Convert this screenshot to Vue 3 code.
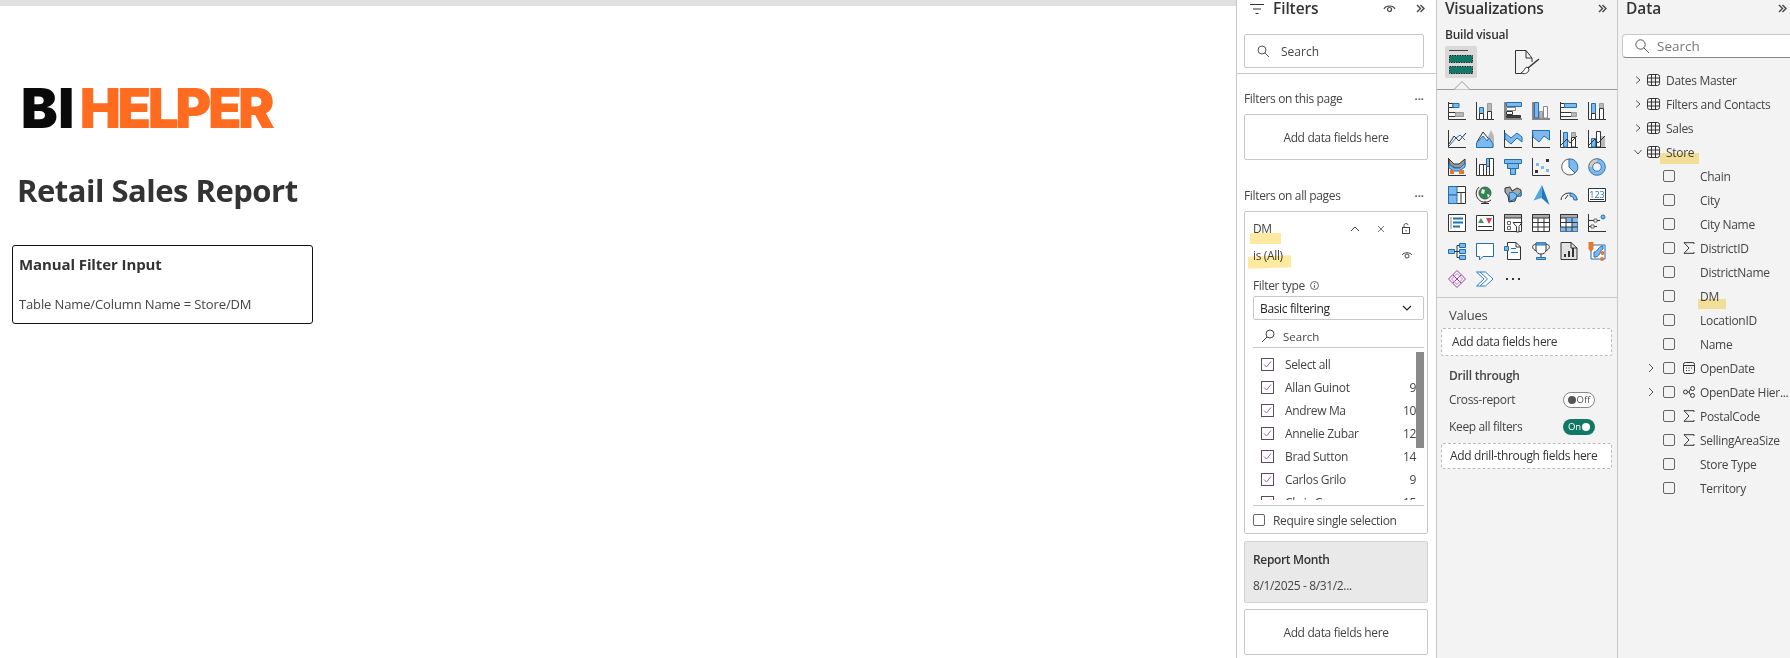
<script setup>
const K = '#333'
const B = '#1f6fb5'
const L = '#7fb8ec'
const G = '#b8b8b8'
const W = '#fff'
const O = '#e8772e'
const R = (x, y, w, h, f, s) => [`M${x} ${y}h${w}v${h}h${-w}z`, s || 'none', f]
const P = (d, s, f, w) => [d, s || 'none', f || 'none', w]
const ax = P('M.5 0V17.5H18', K)
const icons = [
  [ax, R(.5,1.5,4.5,4,W,K), R(5,1.5,6,4,L,B), R(.5,10.5,7,4,W,K), R(7.5,10.5,8,4,G,'#999')],
  [ax, R(3.5,5.5,4,6,L,B), R(3.5,11.5,4,6,W,K), R(11.5,1.5,4,8,G,'#999'), R(11.5,9.5,4,8,W,K)],
  [P('M1 0V17H18','#888',null,2), R(2.5,.5,15,4,L,B), R(2.5,5.5,9,3,W,'#888'), R(2.5,9.5,6,3,W,K), R(2.5,13.5,14,2,'#444',K)],
  [P('M1 0V17H18','#888',null,2), R(2.5,.5,4,15.5,L,B), R(7.5,9.5,3,6.5,G,'#999'), R(11.5,4.5,4,11.5,W,'#888')],
  [ax, R(.5,1.5,4,4,W,K), R(4.5,1.5,12,4,L,B), R(.5,10.5,11,4,W,K), R(11.5,10.5,5,4,G,'#999')],
  [ax, R(3.5,1.5,4,10,L,B), R(3.5,11.5,4,6,W,K), R(11.5,1.5,4,5,G,'#999'), R(11.5,6.5,4,11,W,K)],

  [ax, P('M1 14L6 6L11 11L18 3',K), P('M1 16L8 8L12 5L17 10',B)],
  [P('M11 9L15 0L18 6V17H11z','none',G), P('M1 12L7 2L12 8',K), P('M.5 17.5V13L7 6L11 11L13 8L17 14V17.5z',B,L)],
  [ax, P('M1 3L7 8L13 3L18 7V12L13 8L7 14L1 9z',B,L)],
  [ax, P('M.5 .5H17.5V10L12 6L7 12L1 7z',B,L)],
  [ax, R(3.5,2.5,4,14.5,L,B), R(11.5,2.5,4,5,G,'#999'), R(11.5,7.5,4,9.5,W,K), P('M0 16L7 9L10 13L17 6',K)],
  [ax, R(3.5,8.5,4,8.5,L,B), R(8.5,1.5,4,15.5,W,K), R(13,6,4,11,G), P('M0 16L7 9L10 13L17 6',K)],

  [ax, P('M1 1L6 6H11L17 1V7L12 10H7L1 6z',K,'#999'), P('M1 6L6 10L12 10L17 5V9L11 13H6L1 10z',B,L), R(2,12,4,4,O), R(11,12,5,4,O)],
  [ax, R(3.5,6.5,4,11,W,K), R(7.5,6.5,3,11,W,K), R(10.5,.5,3,8,L,B), R(13.5,.5,4,17,W,K)],
  [R(.5,1.5,17,4,L,B), R(3.5,5.5,11,5,L,B), R(6.5,10.5,5,6,L,B)],
  [ax, R(4,5,3,3,L), R(9,8,3,3,L), R(14,11,3,3,L), R(14,1,3,3,K), R(3,12,3,3,K)],
  [P('M9 1A8 8 0 1 0 15 15','#555',W), P('M9 1A8 8 0 0 1 15 15L9 9z',B,L)],
  [P('M9 2.7A6.3 6.3 0 1 1 2.7 9',L,'none',3.4), P('M2.7 9A6.3 6.3 0 0 1 9 2.7','#ccc','none',3.4), P('M9 .7A8.3 8.3 0 1 1 .7 9',B), P('M.7 9A8.3 8.3 0 0 1 9 .7','#666'), P('M9 4.7A4.3 4.3 0 1 1 4.7 9',B), P('M4.7 9A4.3 4.3 0 0 1 9 4.7','#666')],

  [R(.5,.5,17,17,W,K), R(.5,.5,8.5,8.5,L,B), R(.5,9,8.5,8.5,L,B), P('M9 6.5H17M13 6.5V17',K)],
  [P('M9 1A6 6 0 1 1 9 13A6 6 0 1 1 9 1','#555','#2b8a4f'), P('M6 3L9 4L8 8L5 7zM11 8L14 9L12 12z','none','#eee'), P('M3 1A8.5 8.5 0 0 0 15 14',K), P('M9 15V17M5 17.5H13',K)],
  [P('M1 2L6 1L8 5L13 2L17 4V10L13 10L11 15L5 16L4 10L1 6z',K,'#a8a8a8'), P('M5 7L9 6L13 9L12 12L9 14L6 15z',B,L), P('M13 10L17 6V10z',B,L)],
  [P('M10 -1L1.5 14.5L9.5 12z','none','#4fa9de'), P('M10 -1L17.5 19L9.5 12z','none','#1f78c4')],
  [P('M1 14A8 7 0 0 1 17 14',K), P('M5 13L8 9',K), P('M10 7A7 7 0 0 1 17 14H14A4 4 0 0 0 10 10z',B,L)],
  [R(.5,2.5,17,13,W,K), P('M2 13.5H16',K)],

  [R(.5,.5,17,17,W,K), P('M3 3V15','#888'), P('M5 4.5H15M5 8.5H15M5 12.5H12',B,'none',2)],
  [R(.5,1.5,17,15,W,K), P('M5 4L8 9H2z','none','#3f9a5f'), P('M10 4H16L13 10z','none','#d9434e'), P('M2 12.5H16',K)],
  [R(.5,.5,17,17,W,K), R(.5,.5,17,3.5,'#aaa',K), R(3.5,7.5,3,3,W,'#666'), R(3.5,12.5,3,3,W,'#666'), P('M9 8.5H18L15 12.5V18H12.5V12.5z',K,W)],
  [R(.5,.5,17,17,W,K), R(.5,.5,17,3.5,'#aaa',K), P('M.5 8.5H17.5M.5 13H17.5M6 4V17.5M12 4V17.5',K)],
  [R(.5,.5,17,17,W,K), R(.5,.5,17,3.5,'#aaa',K), R(6,4,12,4.5,L), R(12,8.5,5.5,4.5,L), R(.5,13,17,4.5,L), P('M.5 8.5H17.5M.5 13H17.5M6 4V17.5M12 4V17.5',K)],
  [P('M.5 0V18M.5 17.5H18',K), P('M.5 6.5H12M.5 12.5H9',K), R(6,5,3,3,W,'#666'), R(3,11,3,3,W,'#666'), P('M15 1A2 2 0 1 1 15 5A2 2 0 1 1 15 1',B,L)],

  [R(.5,7.5,6,4,L,B), R(11.5,1.5,6,4,L,B), R(11.5,7.5,6,4,L,B), R(11.5,13.5,6,4,L,B), P('M6.5 9.5H11.5M9 3.5V15.5M9 3.5H11.5M9 15.5H11.5',K)],
  [P('M.5 1.5H17.5V14.5H7L3.5 18V14.5H.5z',B,W)],
  [P('M3.5 .5H12L16.5 5V17.5H3.5z',K,W), P('M12 .5V5H16.5',K), R(.5,4.5,4,4,L,B), P('M7 6.5H12M7 10.5H14',B)],
  [P('M3.5 2.5C-1 2.5 0 8 5 9M14.5 2.5C19 2.5 18 8 13 9',K), P('M4 1H14V8C14 11 11 12 9 12C7 12 4 11 4 8z',K,W), R(4,1,10,2,L,B), P('M9 12V15',K), R(4.5,15.5,9,2,L,B)],
  [P('M1 .5H11L17 6V17.5H1z',K,'#e2e2e2'), P('M11 .5V6H17',K), R(4,12,2,3,K), R(8,9,2,6,K), R(12,6,2,9,K)],
  [R(3,3,14,14,W,B), P('M6 10C10 10 9 5 15 4V7C12 8 13 13 8 15H6z',B,L), P('M.5 0H5.5V7L3 10L.5 7z','none',O), P('M14.5 9A2 2 0 1 1 14.5 13A2 2 0 1 1 14.5 9M14 15A2 2 0 1 1 14 19A2 2 0 1 1 14 15','none',O)],

  [P('M9 .5L17.5 9L9 17.5L.5 9z','#a33ea1'), P('M5 5L13 13M13 5L5 13','#a33ea1'), P('M9 3.5L14.5 9L9 14.5L3.5 9z','#c98cc8')],
  [P('M.5 2H9.5L17 9L9.5 16H.5L8 9z','#2a7bd3',W), P('M4 2L11.5 9L4 16','#2a7bd3')],
  [R(2,8,2,2,K), R(8,8,2,2,K), R(14,8,2,2,K)]
]
const people = [
  ['Select all', ''], ['Allan Guinot', '9'], ['Andrew Ma', '10'], ['Annelie Zubar', '12'],
  ['Brad Sutton', '14'], ['Carlos Grilo', '9'], ['Chris Gray', '15']
]
const tables = ['Dates Master', 'Filters and Contacts', 'Sales', 'Store']
const fields = [
  { n: 'Chain' }, { n: 'City' }, { n: 'City Name' }, { n: 'DistrictID', i: 's' }, { n: 'DistrictName' },
  { n: 'DM' }, { n: 'LocationID' }, { n: 'Name' }, { n: 'OpenDate', i: 'c', e: 1 },
  { n: 'OpenDate Hier...', i: 'h', e: 1 }, { n: 'PostalCode', i: 's' }, { n: 'SellingAreaSize', i: 's' },
  { n: 'Store Type' }, { n: 'Territory' }
]
</script>

<template>
  <div class="app">
    <main class="canvas">
      <div class="topbar"></div>
      <div class="logo"><span class="bi">BI</span><span class="helper">HELPER</span></div>
      <h1 class="title">Retail Sales Report</h1>
      <section class="note">
        <h2>Manual Filter Input</h2>
        <p>Table Name/Column Name = Store/DM</p>
      </section>
    </main>

    <aside class="filters">
      <header class="fhead">
        <svg class="ic" width="14" height="12" viewBox="0 0 14 12"><path d="M0 1.5H14M3 6H11M5.5 10.5H8.5" stroke="#333" stroke-width="1.2" fill="none"/></svg>
        <span class="ptitle">Filters</span>
        <svg class="eye" width="13" height="10" viewBox="0 0 13 10"><path d="M1 5C3 1 10 1 12 5" stroke="#444" stroke-width="1.2" fill="none"/><circle cx="6.5" cy="5.5" r="2" stroke="#444" stroke-width="1.2" fill="none"/></svg>
        <svg class="chev" width="9" height="9" viewBox="0 0 9 9"><path d="M1 1L4.5 4.5L1 8M4.5 1L8 4.5L4.5 8" stroke="#444" stroke-width="1.4" fill="none"/></svg>
      </header>
      <div class="fsearch">
        <svg width="13" height="13" viewBox="0 0 13 13"><circle cx="5" cy="5" r="4" stroke="#555" fill="none"/><path d="M8 8L12 12" stroke="#555"/></svg>
        <span>Search</span>
      </div>
      <div class="fsep"></div>
      <div class="fsec first"><span>Filters on this page</span><i class="dots">···</i></div>
      <div class="dropbox">Add data fields here</div>
      <div class="fsec second"><span>Filters on all pages</span><i class="dots">···</i></div>
      <section class="fcard">
        <div class="frow dm">
          <span>DM</span>
          <svg class="a1" width="10" height="6" viewBox="0 0 10 6"><path d="M1 5L5 1L9 5" stroke="#444" fill="none"/></svg>
          <svg class="a2" width="8" height="8" viewBox="0 0 8 8"><path d="M1 1L7 7M7 1L1 7" stroke="#777" fill="none"/></svg>
          <svg class="a3" width="10" height="11" viewBox="0 0 10 11"><rect x="1.5" y="4.5" width="7" height="6" stroke="#444" fill="none"/><path d="M3 4.5V2.5C3 0 7 0 7 2" stroke="#444" fill="none"/><path d="M5 7V8.5" stroke="#444"/></svg>
        </div>
        <div class="frow isall">
          <span>is (All)</span>
          <svg class="a3" width="12" height="9" viewBox="0 0 12 9"><path d="M1 4C3 1 9 1 11 4" stroke="#444" fill="none"/><circle cx="6" cy="5" r="2" stroke="#444" fill="none"/></svg>
        </div>
        <div class="ftype">Filter type
          <svg width="9" height="9" viewBox="0 0 9 9"><circle cx="4.5" cy="4.5" r="4" stroke="#666" fill="none"/><path d="M4.5 4V7M4.5 2V3" stroke="#666"/></svg>
        </div>
        <div class="fselect">
          <span>Basic filtering</span>
          <svg width="10" height="6" viewBox="0 0 10 6"><path d="M1 1L5 5L9 1" stroke="#222" fill="none" stroke-width="1.2"/></svg>
        </div>
        <div class="lsearch">
          <svg width="14" height="14" viewBox="0 0 14 14"><circle cx="9" cy="5" r="4" stroke="#444" fill="none"/><path d="M6 8L1 13" stroke="#444"/></svg>
          <span>Search</span>
        </div>
        <div class="plist">
          <div class="pinner">
            <div v-for="p in people" :key="p[0]" class="pitem">
              <svg width="13" height="13" viewBox="0 0 13 13"><rect x=".5" y=".5" width="12" height="12" stroke="#5a4a5a" fill="#fff"/><path d="M3 6.5L5.5 9L10 3.5" stroke="#9a6a9a" fill="none"/></svg>
              <span class="pname">{{ p[0] }}</span>
              <span class="pcount">{{ p[1] }}</span>
            </div>
            <div class="pscroll"></div>
          </div>
        </div>
        <div class="req">
          <span class="box"></span>
          <span>Require single selection</span>
        </div>
      </section>
      <section class="rcard">
        <strong>Report Month</strong>
        <span>8/1/2025 - 8/31/2...</span>
      </section>
      <div class="dropbox last">Add data fields here</div>
    </aside>

    <aside class="viz">
      <header class="phead">
        <span class="ptitle vt">Visualizations</span>
        <svg class="chev" width="9" height="9" viewBox="0 0 9 9"><path d="M1 1L4.5 4.5L1 8M4.5 1L8 4.5L4.5 8" stroke="#444" stroke-width="1.4" fill="none"/></svg>
      </header>
      <div class="build">Build visual</div>
      <div class="tabs">
        <div class="tab on">
          <svg width="32" height="32" viewBox="0 0 32 32">
            <path d="M4 4.5H23" stroke="#444"/>
            <rect x="4.5" y="9.5" width="23" height="7" fill="#117865" stroke="#222" stroke-dasharray="1.5 1"/>
            <rect x="4.5" y="20.5" width="23" height="7" fill="#117865" stroke="#222" stroke-dasharray="1.5 1"/>
          </svg>
        </div>
        <div class="tab second">
          <svg width="25" height="25" viewBox="0 0 25 25">
            <path d="M7 23.5H.5V.5H11L17 8V12M11 .5V8H17" stroke="#333" fill="none"/>
            <path d="M24 9L13 18" stroke="#333" stroke-width="1.5"/>
            <path d="M12 17C9 18 10 21 6 23C11 25 14 22 14 19z" stroke="#333" fill="#fff"/>
          </svg>
        </div>
      </div>
      <div class="tabline"><svg width="18" height="9" viewBox="0 0 18 9"><path d="M0 8.5H1L9 .5L17 8.5H18" stroke="#999" fill="#f3f3f3"/></svg></div>
      <div class="grid">
        <svg v-for="(ic, i) in icons" :key="i" width="18" height="18" viewBox="0 0 18 18">
          <path v-for="(s, j) in ic" :key="j" :d="s[0]" :stroke="s[1]" :fill="s[2] || 'none'" :stroke-width="s[3] || 1"/>
          <text v-if="i === 23" x="9" y="11.5" text-anchor="middle" class="n123">123</text>
        </svg>
      </div>
      <div class="vsep"></div>
      <div class="vlabel">Values</div>
      <div class="dash">Add data fields here</div>
      <div class="drill">Drill through</div>
      <div class="toggle-row first-t">
        <span>Cross-report</span>
        <span class="tg off"><i></i><b>Off</b></span>
      </div>
      <div class="toggle-row">
        <span>Keep all filters</span>
        <span class="tg on"><b>On</b><i></i></span>
      </div>
      <div class="dash d2">Add drill-through fields here</div>
    </aside>

    <aside class="data">
      <header class="phead dhead">
        <span class="ptitle">Data</span>
        <svg class="chev" width="9" height="9" viewBox="0 0 9 9"><path d="M1 1L4.5 4.5L1 8M4.5 1L8 4.5L4.5 8" stroke="#444" stroke-width="1.4" fill="none"/></svg>
      </header>
      <div class="dsearch">
        <svg width="14" height="14" viewBox="0 0 14 14"><circle cx="5.5" cy="5.5" r="4.7" stroke="#555" fill="none"/><path d="M9 9L14 14" stroke="#555"/></svg>
        <span>Search</span>
      </div>
      <div class="dlist">
        <div v-for="(t, i) in tables" :key="t" class="drow">
          <svg class="tw" width="8" height="8" viewBox="0 0 8 8">
            <path v-if="i < 3" d="M2 .5L6 4L2 7.5" stroke="#555" fill="none"/>
            <path v-else d="M.5 2L4 6L7.5 2" stroke="#555" fill="none"/>
          </svg>
          <svg width="13" height="12" viewBox="0 0 13 12"><rect x=".5" y=".5" width="12" height="11" rx="2" stroke="#333" fill="none"/><path d="M4.5 .5V11.5M8.5 .5V11.5M.5 4H12.5M.5 8H12.5" stroke="#333"/></svg>
          <span>{{ t }}</span>
        </div>
        <div v-for="f in fields" :key="f.n" class="drow frow2">
          <svg class="tw2" width="8" height="10" viewBox="0 0 8 10"><path v-if="f.e" d="M2 1L6 5L2 9" stroke="#555" fill="none"/></svg>
          <span class="box"></span>
          <svg class="fi" width="12" height="12" viewBox="0 0 12 12">
            <path v-if="f.i === 's'" d="M11 2V.7H1L6 6L1 11.3H11V10" stroke="#333" fill="none"/>
            <template v-if="f.i === 'c'"><rect x=".5" y=".5" width="11" height="11" rx="2" stroke="#333" fill="none"/><path d="M.5 3.5H11.5" stroke="#333"/><path d="M3 6H4M5.5 6H6.5M8 6H9M3 8.5H4M5.5 8.5H6.5" stroke="#333"/></template>
            <template v-if="f.i === 'h'"><circle cx="2.5" cy="6" r="2" stroke="#333" fill="none"/><circle cx="9.5" cy="2.5" r="2" stroke="#333" fill="none"/><circle cx="9.5" cy="9.5" r="2" stroke="#333" fill="none"/><path d="M4.5 6H6L7.5 3M6 6L7.5 9" stroke="#333" fill="none"/></template>
          </svg>
          <span>{{ f.n }}</span>
        </div>
      </div>
    </aside>

    <span class="hl h-dm"></span>
    <span class="hl h-is"></span>
    <span class="hl h-store"></span>
    <span class="hl h-dm2"></span>
  </div>
</template>

<style scoped>
.app {
  position: relative;
  display: flex;
  width: 1790px;
  height: 658px;
  overflow: hidden;
  background: #fff;
  color: #333;
  font-family: "Open Sans", "Noto Sans", sans-serif;
  font-size: 12px;
}
.canvas { width: 1236px; flex: none; }
.topbar { height: 6px; background: #e1e1e1; }
.logo {
  display: flex;
  margin: 71px 0 0 21px;
  height: 62px;
  font-family: Inter, sans-serif;
  font-weight: 900;
  font-size: 55px;
  line-height: 62px;
  white-space: nowrap;
}
.bi { color: #0a0a0a; letter-spacing: .5px; }
.helper { color: #ff6b1f; margin-left: 5px; letter-spacing: -3.5px; }
.title {
  margin: 31px 0 0 17px;
  font-size: 31px;
  line-height: 40px;
  font-weight: 700;
  color: #333;
  letter-spacing: -.5px;
}
.note {
  margin: 35px 0 0 12px;
  box-sizing: border-box;
  width: 301px;
  height: 79px;
  border: 1.5px solid #111;
  border-radius: 3px;
  padding: 8px 6px;
}
.note h2 { margin: 0; font-size: 15px; line-height: 20px; font-weight: 700; color: #333; letter-spacing: -.1px; }
.note p { margin: 21px 0 0; font-size: 13px; line-height: 18px; color: #444; letter-spacing: -.13px; }

.filters {
  width: 201px;
  flex: none;
  box-sizing: border-box;
  border-left: 1px solid #c8c8c8;
  border-right: 1px solid #c8c8c8;
  padding: 0 0 0 7px;
  background: #fff;
}
.fhead { display: flex; align-items: center; height: 17px; margin: 0 11px 0 6px; }
.fhead svg { flex: none; }
.ptitle { font-size: 15.5px; font-weight: 600; color: #333; letter-spacing: -.1px; line-height: 17px; }
.vt { letter-spacing: -.3px; }
.fhead .ptitle { margin-left: 9px; }
.eye { margin-left: auto; }
.fhead .chev { margin-left: 20px; }
.fsearch {
  display: flex;
  align-items: center;
  gap: 11px;
  box-sizing: border-box;
  width: 180px;
  height: 34px;
  margin-top: 17px;
  padding-left: 12px;
  border: 1px solid #c8c8c8;
  border-radius: 2px;
  color: #444;
}
.fsep { height: 1px; margin: 5px 0 0 -7px; background: #c8c8c8; width: 199px; }
.fsec { display: flex; width: 183px; justify-content: space-between; align-items: center; height: 16px; letter-spacing: -.35px; color: #444; }
.fsec.first { margin-top: 16px; }
.fsec.second { margin-top: 27px; }
.dots { font-style: normal; font-weight: 700; color: #555; letter-spacing: 0; padding-right: 3px; font-size: 11px; }
.dropbox {
  display: flex;
  align-items: center;
  justify-content: center;
  box-sizing: border-box;
  width: 184px;
  height: 46px;
  margin-top: 8px;
  border: 1px solid #c8c8c8;
  border-radius: 2px;
  letter-spacing: -.35px;
  color: #444;
}
.dropbox.last { margin-top: 6px; }
.fcard {
  box-sizing: border-box;
  width: 184px;
  height: 323px;
  margin-top: 8px;
  padding: 0 3px 0 8px;
  border: 1px solid #c8c8c8;
  border-radius: 2px;
  letter-spacing: -.35px;
}
.frow { display: flex; align-items: center; height: 27px; position: relative; color: #444; }
.frow.dm { margin-top: 3px; }
.frow svg { position: absolute; }
.a1 { left: 97px; }
.a2 { left: 124px; }
.a3 { left: 148px; }
.ftype { display: flex; align-items: center; gap: 5px; height: 16px; margin-top: 8px; color: #444; }
.fselect {
  display: flex;
  align-items: center;
  justify-content: space-between;
  box-sizing: border-box;
  height: 24px;
  margin-top: 3px;
  padding: 0 11px 0 6px;
  border: 1px solid #c8c8c8;
  border-radius: 2px;
  color: #222;
  font-weight: 500;
}
.lsearch {
  display: flex;
  align-items: center;
  gap: 8px;
  box-sizing: border-box;
  height: 28px;
  padding: 5px 0 0 8px;
  border-bottom: 1px solid #c8c8c8;
  color: #444;
  font-size: 11.5px;
  letter-spacing: 0;
}
.plist { box-sizing: border-box; height: 158px; border-bottom: 1px solid #c8c8c8; }
.pinner { position: relative; box-sizing: border-box; height: 152px; padding-top: 5px; overflow: hidden; }
.pitem { display: flex; align-items: center; height: 23px; padding-left: 8px; color: #444; }
.pname { margin-left: 11px; }
.pcount { margin-left: auto; margin-right: 8px; }
.pscroll { position: absolute; right: 0; top: 4px; width: 8px; height: 96px; background: #8a8a8a; }
.req { display: flex; align-items: center; gap: 8px; height: 28px; color: #444; }
.box {
  flex: none;
  box-sizing: border-box;
  width: 12px;
  height: 12px;
  border: 1px solid #666;
  border-radius: 2px;
  background: transparent;
}
.rcard {
  display: flex;
  flex-direction: column;
  box-sizing: border-box;
  width: 184px;
  height: 62px;
  margin-top: 7px;
  padding: 10px 8px;
  background: #e9e9e9;
  border: 1px solid #d2d2d2;
  border-radius: 2px;
  letter-spacing: -.35px;
  color: #444;
}
.rcard strong { font-weight: 600; color: #333; line-height: 16px; }
.rcard span { margin-top: 10px; line-height: 16px; }

.viz {
  width: 181px;
  flex: none;
  box-sizing: border-box;
  background: #f3f3f3;
  border-right: 1px solid #c8c8c8;
}
.phead { display: flex; align-items: center; justify-content: space-between; height: 17px; padding: 0 10px 0 8px; }
.build { margin: 10px 0 0 8px; font-weight: 600; line-height: 16px; letter-spacing: -.25px; color: #333; }
.tabs { display: flex; gap: 38px; margin: 3px 0 0 8px; }
.tab { display: flex; align-items: center; width: 32px; height: 32px; border-radius: 2px; }
.tab.on { background: #d9d9d9; }
.tabline { position: relative; height: 11px; border-bottom: 1px solid #999; }
.tabline svg { position: absolute; left: 16px; bottom: -1px; }
.grid {
  display: grid;
  grid-template-columns: repeat(6, 18px);
  grid-auto-rows: 18px;
  column-gap: 10px;
  row-gap: 10px;
  margin: 12px 0 0 11px;
}
.grid svg { overflow: visible; }
.n123 { font-size: 9px; fill: #1f6fb5; font-family: "Open Sans", sans-serif; }
.vsep { height: 1px; margin-top: 9px; background: #c8c8c8; }
.vlabel { margin: 9px 0 0 12px; line-height: 16px; font-size: 13px; color: #444; letter-spacing: -.2px; }
.dash {
  box-sizing: border-box;
  width: 171px;
  height: 28px;
  margin: 5px 0 0 4px;
  padding-left: 10px;
  border: 1px dashed #bbb;
  border-radius: 2px;
  background: #fff;
  line-height: 26px;
  letter-spacing: -.35px;
  color: #333;
}
.dash.d2 { margin-top: 3px; padding-left: 8px; height: 26px; line-height: 24px; }
.drill { margin: 12px 0 0 12px; font-weight: 600; line-height: 16px; letter-spacing: -.25px; color: #444; }
.toggle-row {
  display: flex;
  align-items: center;
  justify-content: space-between;
  height: 27px;
  padding: 0 22px 0 12px;
  letter-spacing: -.35px;
  color: #444;
}
.first-t { margin-top: 2px; }
.tg {
  display: flex;
  align-items: center;
  justify-content: center;
  gap: 1px;
  box-sizing: border-box;
  width: 32px;
  height: 16px;
  border-radius: 8px;
  font-size: 9.5px;
  letter-spacing: 0;
}
.tg i { width: 8px; height: 8px; border-radius: 50%; }
.tg b { font-weight: 400; }
.tg.off { border: 1px solid #888; background: #fff; color: #555; }
.tg.off i { background: #555; }
.tg.on { background: #117865; color: #fff; }
.tg.on i { background: #fff; }

.data { flex: 1; min-width: 0; background: #f3f3f3; }
.dhead { padding: 0 3px 0 8px; }
.dsearch {
  display: flex;
  align-items: center;
  gap: 8px;
  box-sizing: border-box;
  width: 190px;
  height: 24px;
  margin: 17px 0 0 4px;
  padding-left: 12px;
  background: #fff;
  border: 1px solid #c8c8c8;
  border-bottom-color: #888;
  border-radius: 4px;
  font-size: 13.5px;
  color: #777;
}
.dlist { margin-top: 10px; }
.drow { display: flex; align-items: center; height: 24px; padding-left: 16px; letter-spacing: -.3px; color: #444; white-space: nowrap; }
.tw { margin-right: 5px; }
.drow > svg + svg { margin-right: 6px; }
.frow2 { padding-left: 29px; }
.tw2 { margin-right: 8px; }
.frow2 .fi { margin: 0 5px 0 8px; }

.hl { position: absolute; background: #fde27e; opacity: .75; mix-blend-mode: multiply; }
.h-dm { left: 1250px; top: 233px; width: 31px; height: 11px; }
.h-is { left: 1248px; top: 256px; width: 43px; height: 12px; transform: rotate(-2deg); }
.h-store { left: 1660px; top: 153px; width: 39px; height: 11px; }
.h-dm2 { left: 1698px; top: 299px; width: 28px; height: 10px; }
</style>

<style>
html, body { margin: 0; overflow: hidden; background: #fff; }
</style>
